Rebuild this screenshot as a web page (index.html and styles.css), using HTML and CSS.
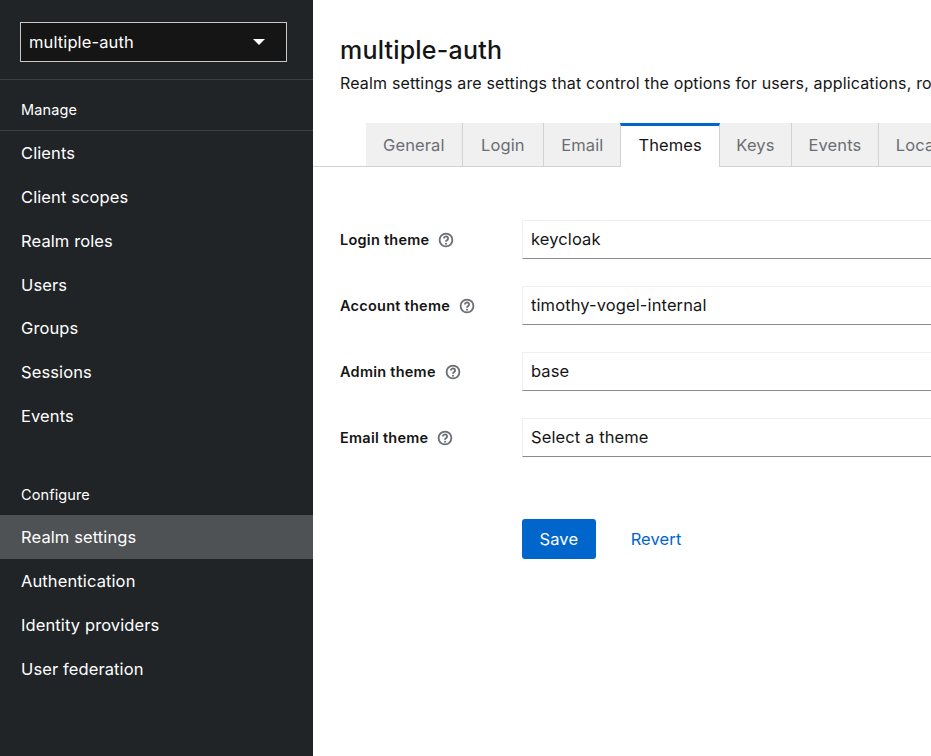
FILE: index.html
```html
<!DOCTYPE html>
<html lang="en">
<head>
    <meta charset="UTF-8">
    <meta name="viewport" content="width=device-width, initial-scale=1.0">
    <title>Realm settings</title>
    <link rel="stylesheet" href="styles.css">
</head>
<body>
    <div class="page">
        <!-- Sidebar -->
        <nav class="sidebar">
            <div class="realm-box">
                <div class="realm-select">
                    <span>multiple-auth</span>
                    <span class="caret"></span>
                </div>
            </div>
            <h2 class="nav-title nav-title-first">Manage</h2>
            <ul class="nav-list nav-list-manage">
                <li>Clients</li>
                <li>Client scopes</li>
                <li>Realm roles</li>
                <li>Users</li>
                <li>Groups</li>
                <li>Sessions</li>
                <li>Events</li>
            </ul>
            <h2 class="nav-title nav-title-second">Configure</h2>
            <ul class="nav-list">
                <li class="current">Realm settings</li>
                <li>Authentication</li>
                <li>Identity providers</li>
                <li>User federation</li>
            </ul>
        </nav>

        <!-- Main content -->
        <main class="content">
            <header class="page-head">
                <h1>multiple-auth</h1>
                <p>Realm settings are settings that control the options for users, applications, roles, and groups in the current realm.</p>
            </header>

            <div class="tabs">
                <a class="tab">General</a>
                <a class="tab tab-login">Login</a>
                <a class="tab">Email</a>
                <a class="tab active">Themes</a>
                <a class="tab tab-narrow">Keys</a>
                <a class="tab tab-narrow">Events</a>
                <a class="tab">Localization</a>
                <a class="tab">Security defenses</a>
            </div>

            <form class="theme-form">
                <div class="form-row">
                    <label>Login theme
                        <svg class="help" viewBox="0 0 16 16"><circle cx="8" cy="8" r="6.4"/><path d="M5.9 6.4a2.1 2 0 1 1 3.2 1.7c-.7.4-1.1.8-1.1 1.6"/><circle class="dot" cx="8" cy="11.7" r="1"/></svg>
                    </label>
                    <div class="field">keycloak</div>
                </div>
                <div class="form-row">
                    <label>Account theme
                        <svg class="help" viewBox="0 0 16 16"><circle cx="8" cy="8" r="6.4"/><path d="M5.9 6.4a2.1 2 0 1 1 3.2 1.7c-.7.4-1.1.8-1.1 1.6"/><circle class="dot" cx="8" cy="11.7" r="1"/></svg>
                    </label>
                    <div class="field">timothy-vogel-internal</div>
                </div>
                <div class="form-row">
                    <label>Admin theme
                        <svg class="help" viewBox="0 0 16 16"><circle cx="8" cy="8" r="6.4"/><path d="M5.9 6.4a2.1 2 0 1 1 3.2 1.7c-.7.4-1.1.8-1.1 1.6"/><circle class="dot" cx="8" cy="11.7" r="1"/></svg>
                    </label>
                    <div class="field">base</div>
                </div>
                <div class="form-row">
                    <label>Email theme
                        <svg class="help" viewBox="0 0 16 16"><circle cx="8" cy="8" r="6.4"/><path d="M5.9 6.4a2.1 2 0 1 1 3.2 1.7c-.7.4-1.1.8-1.1 1.6"/><circle class="dot" cx="8" cy="11.7" r="1"/></svg>
                    </label>
                    <div class="field">Select a theme</div>
                </div>
                <div class="actions">
                    <button type="button" class="btn-save">Save</button>
                    <button type="button" class="btn-revert">Revert</button>
                </div>
            </form>
        </main>
    </div>
</body>
</html>
```

FILE: styles.css
```css
/* General */
html, body {
    height: 100%;
}

body {
    margin: 0;
    font-family: "Inter", "Noto Sans", sans-serif;
    font-size: 16.5px;
    letter-spacing: 0.11px;
    color: #151515;
    background: #fff;
    overflow: hidden;
}

.page {
    display: flex;
    height: 756px;
    overflow: hidden;
}

/* Sidebar */
.sidebar {
    flex: 0 0 313px;
    background: #212427;
    color: #fff;
}

.realm-box {
    height: 80px;
    box-sizing: border-box;
    padding: 22px 26px 0 20px;
    border-bottom: 1px solid #3c3f42;
}

.realm-select {
    display: flex;
    align-items: center;
    justify-content: space-between;
    box-sizing: border-box;
    height: 40px;
    padding: 0 21px 0 8px;
    background: #151515;
    border: 1px solid #c7c7c7;
}

.caret {
    width: 0;
    height: 0;
    border-left: 6px solid transparent;
    border-right: 6px solid transparent;
    border-top: 6px solid #fff;
}

.nav-title {
    margin: 0;
    padding: 0 21px;
    font-size: 14.5px;
    font-weight: 400;
    line-height: 20px;
}

.nav-title-first {
    padding-top: 20px;
    padding-bottom: 10px;
    border-bottom: 1px solid #3c3f42;
}

.nav-title-second {
    margin-top: 46px;
    padding-bottom: 10px;
}

.nav-list {
    list-style: none;
    margin: 0;
    padding: 0;
}

.nav-list li {
    height: 44px;
    line-height: 44px;
    padding: 0 21px;
}

.nav-list-manage {
    padding-top: 1px;
}

.nav-list-manage li {
    height: 43.85px;
    line-height: 43.85px;
}

.nav-list li.current {
    background: #4f5255;
}

/* Main */
.content {
    flex: 1;
    min-width: 0;
    overflow: hidden;
}

.page-head {
    padding: 33px 0 0 27px;
}

.page-head h1 {
    margin: 0;
    font-size: 25px;
    letter-spacing: 0.2px;
    font-weight: 500;
    line-height: 34px;
}

.page-head p {
    margin: 4px 0 0;
    font-size: 16px;
    letter-spacing: 0.16px;
    line-height: 24px;
    white-space: nowrap;
}

/* Tabs */
.tabs {
    display: flex;
    margin-top: 28px;
    padding-left: 53px;
    height: 43px;
    border-bottom: 1px solid #d2d2d2;
}

.tab {
    flex: none;
    box-sizing: border-box;
    height: 44px;
    padding: 11px 17px 0;
    line-height: 22px;
    color: #6a6e73;
    background: #f0f0f0;
    border-right: 1px solid #d2d2d2;
    border-bottom: 1px solid #d2d2d2;
}

.tab-login {
    padding-left: 18.5px;
    padding-right: 18.5px;
}

.tab-narrow {
    padding-left: 16.5px;
    padding-right: 16.5px;
}

.tab.active {
    height: 44px;
    color: #151515;
    background: #fff;
    border-top: 3px solid #06c;
    border-left: 1px solid #d2d2d2;
    border-bottom: 0;
    margin-left: -1px;
    padding-top: 8px;
}

/* Form */
.theme-form {
    padding: 53px 0 0 27px;
}

.form-row {
    display: flex;
    align-items: center;
    height: 39px;
    margin-bottom: 27px;
}

.form-row label {
    flex: 0 0 182px;
    display: flex;
    align-items: center;
    gap: 9px;
    font-size: 14.5px;
    letter-spacing: 0.25px;
    font-weight: 600;
}

.help {
    width: 16px;
    height: 16px;
    fill: none;
    stroke: #6a6e73;
    stroke-width: 1.8;
}

.help .dot {
    fill: #6a6e73;
    stroke: none;
}

.field {
    flex: none;
    width: 600px;
    box-sizing: border-box;
    height: 39px;
    line-height: 37px;
    padding-left: 8px;
    border: 1px solid #f0f0f0;
    border-bottom-color: #8a8d90;
}

.actions {
    display: flex;
    align-items: center;
    gap: 18px;
    margin: 62px 0 0 182px;
}

.actions button {
    font: inherit;
    letter-spacing: inherit;
    height: 40px;
    border: 0;
    border-radius: 3px;
    padding: 0 17px;
}

.actions .btn-save {
    padding: 0 17.5px;
    background: #06c;
    color: #fff;
}

.btn-revert {
    background: none;
    color: #06c;
}
```
